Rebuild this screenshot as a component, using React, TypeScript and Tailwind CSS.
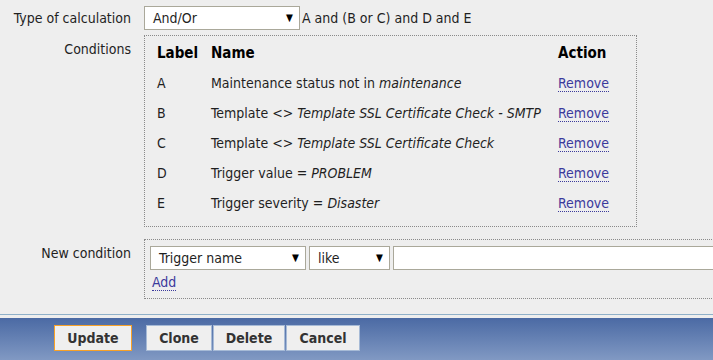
import { useState } from "react";

type Condition = {
  label: string;
  prefix: string;
  value: string;
};

const conditions: Condition[] = [
  { label: "A", prefix: "Maintenance status not in ", value: "maintenance" },
  { label: "B", prefix: "Template <> ", value: "Template SSL Certificate Check - SMTP" },
  { label: "C", prefix: "Template <> ", value: "Template SSL Certificate Check" },
  { label: "D", prefix: "Trigger value = ", value: "PROBLEM" },
  { label: "E", prefix: "Trigger severity = ", value: "Disaster" },
];

function Caret() {
  return <span className="text-[10px] leading-none text-black">▼</span>;
}

function Select({ value, className }: { value: string; className: string }) {
  return (
    <div
      className={`flex h-6 items-center justify-between border border-[#aaa89a] bg-white pl-2 pr-[6px] ${className}`}
    >
      <span>{value}</span>
      <Caret />
    </div>
  );
}

function RemoveLink() {
  return (
    <a className="cursor-pointer border-b border-dotted border-[#3b3a9c] leading-[16px] text-[#3b3a9c]">
      Remove
    </a>
  );
}

export default function App() {
  const [rows, setRows] = useState(conditions);

  return (
    <div
      className="h-[360px] w-[713px] overflow-hidden bg-[#eeeeee] text-[14px] text-[#1f1f1f]"
      style={{ fontFamily: '"DejaVu Sans Condensed", "Liberation Sans", sans-serif' }}
    >
      <div className="grid grid-cols-[131px_1fr] gap-x-[13px] pt-[6px]">
        <div className="flex h-6 items-center justify-end whitespace-nowrap">Type of calculation</div>
        <div className="flex items-center">
          <Select value="And/Or" className="w-[156px]" />
          <span className="ml-[2px]">A and (B or C) and D and E</span>
        </div>

        <div className="mt-[5px] pt-[4px] text-right">Conditions</div>
        <div className="mt-[5px] w-[493px] border border-dotted border-[#8a8a8a] pb-2 pl-3 pt-[2px]">
          <div className="flex h-[30px] items-center text-[15px] font-bold text-black">
            <div className="w-[54px]">Label</div>
            <div className="w-[347px]">Name</div>
            <div>Action</div>
          </div>
          {rows.map((row) => (
            <div key={row.label} className="flex h-[30px] items-center">
              <div className="w-[54px]">{row.label}</div>
              <div className="w-[347px] whitespace-nowrap">
                {row.prefix}
                <i>{row.value}</i>
              </div>
              <div onClick={() => setRows((r) => r.filter((x) => x.label !== row.label))}>
                <RemoveLink />
              </div>
            </div>
          ))}
        </div>

        <div className="mt-3 pt-[4px] text-right whitespace-nowrap">New condition</div>
        <div className="mt-3 w-[700px] border border-dotted border-[#8a8a8a] px-[5px] pb-[5px] pt-[6px]">
          <div className="flex gap-[3px]">
            <Select value="Trigger name" className="w-[156px]" />
            <Select value="like" className="w-[81px]" />
            <div className="h-6 flex-1 border border-[#aaa89a] bg-white" />
          </div>
          <div className="mt-[2px] pl-[2px]">
            <a className="cursor-pointer border-b border-dotted border-[#3b3a9c] text-[#3b3a9c]">Add</a>
          </div>
        </div>
      </div>

      <div className="mt-[15px] h-px bg-[#8fb0c9]" />
      <div className="mt-[3px] flex h-[42px] items-start bg-gradient-to-b from-[#4b6aa4] to-[#8199c3] pl-[54px] pt-[7px] font-bold text-[#333]">
        <button className="h-[26px] w-[78px] border border-[#f7a128] bg-[#efefef]">Update</button>
        <div className="ml-[14px] flex gap-px">
          <button className="h-[26px] w-[66px] border border-[#a6bad6] bg-[#efefef]">Clone</button>
          <button className="h-[26px] w-[72px] border border-[#a6bad6] bg-[#efefef]">Delete</button>
          <button className="h-[26px] w-[74px] border border-[#a6bad6] bg-[#efefef]">Cancel</button>
        </div>
      </div>
    </div>
  );
}
